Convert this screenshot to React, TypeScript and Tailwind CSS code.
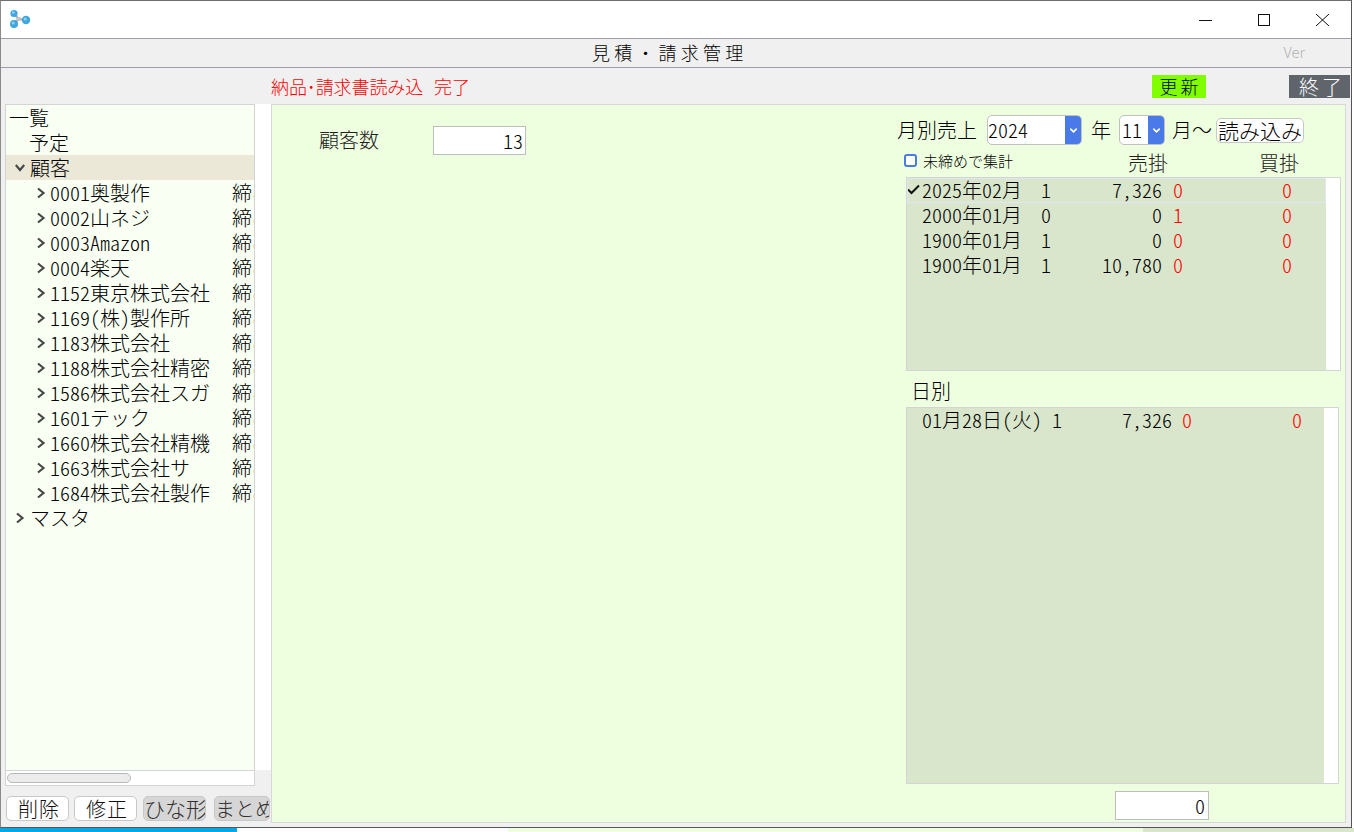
import { ChevronDown } from 'lucide-react';

const customers = [
  '0001奥製作',
  '0002山ネジ',
  '0003Amazon',
  '0004楽天',
  '1152東京株式会社',
  '1169(株)製作所',
  '1183株式会社',
  '1188株式会社精密',
  '1586株式会社スガ',
  '1601テック',
  '1660株式会社精機',
  '1663株式会社サ',
  '1684株式会社製作',
];

const months = [
  { date: '2025年02月', count: '1', amount: '7,326', a: '0', b: '0', on: true },
  { date: '2000年01月', count: '0', amount: '0', a: '1', b: '0', on: false },
  { date: '1900年01月', count: '1', amount: '0', a: '0', b: '0', on: false },
  { date: '1900年01月', count: '1', amount: '10,780', a: '0', b: '0', on: false },
];

function AppIcon() {
  return (
    <svg width="24" height="24" viewBox="0 0 24 24" className="ml-[8px]">
      <path d="M5 5.5 L9.5 11 L17 12 M9.5 11 L5 16" stroke="#a8a8a8" strokeWidth="2" fill="none" />
      <rect x="7.5" y="9" width="4" height="4" fill="#c4c4c4" />
      <circle cx="5" cy="5.5" r="3.6" fill="#3fa6de" />
      <circle cx="4.3" cy="4.6" r="1.4" fill="#8fd2f2" />
      <circle cx="17" cy="12" r="4.2" fill="#3fa6de" />
      <circle cx="16.2" cy="11" r="1.6" fill="#8fd2f2" />
      <circle cx="5" cy="16" r="4" fill="#3fa6de" />
      <circle cx="4.2" cy="15" r="1.5" fill="#8fd2f2" />
    </svg>
  );
}

function ChevronClosed() {
  return (
    <svg width="10" height="12" viewBox="0 0 10 12" className="shrink-0">
      <path d="M2 1.5 L7.5 6 L2 10.5" stroke="#484848" strokeWidth="2.2" fill="none" />
    </svg>
  );
}

function ChevronOpen() {
  return (
    <svg width="10" height="10" viewBox="0 0 10 10" className="shrink-0">
      <path d="M0.8 2 L5 7 L9.2 2" stroke="#484848" strokeWidth="2.2" fill="none" />
    </svg>
  );
}

function SelectBox({ value, box }: { value: string; box: string }) {
  return (
    <div className={`${box} h-[30px] flex bg-white border border-[#c0c0c0] rounded-[5px] overflow-hidden leading-[28px]`}>
      <span className="flex-1">{value}</span>
      <span className="w-[16px] bg-[#4a7ae8] flex items-center justify-center">
        <ChevronDown size={11} strokeWidth={3.5} className="text-white" />
      </span>
    </div>
  );
}

export default function App() {
  return (
    <div className="w-[1354px] h-[832px] overflow-hidden bg-white text-black text-[20px] font-light [font-family:'Noto_Sans_CJK_JP',sans-serif] [font-feature-settings:'hwid']">
      <div className="w-[1352px] h-[828px] flex flex-col bg-[#f0f0f0] border border-t-[#6e6e6e] border-l-[#8a8a8a] border-r-[#555] border-b-[#555]">
        {/* title bar */}
        <div className="h-[37px] shrink-0 bg-white flex items-center">
          <AppIcon />
          <div className="ml-auto flex items-center">
            <svg width="58" height="16" viewBox="0 0 58 16">
              <path d="M22 8.5 H35" stroke="#111" strokeWidth="1" />
            </svg>
            <svg width="58" height="16" viewBox="0 0 58 16">
              <rect x="23.5" y="2.5" width="11" height="11" stroke="#111" strokeWidth="1" fill="none" />
            </svg>
            <svg width="58" height="16" viewBox="0 0 58 16">
              <path d="M23 2 L36 14 M36 2 L23 14" stroke="#111" strokeWidth="1" fill="none" />
            </svg>
          </div>
        </div>

        {/* header */}
        <div className="h-[30px] shrink-0 flex items-center border-y border-[#a09ab0] pl-[591px] pr-[46px] pb-[3px] text-[18px] tracking-[4.2px] leading-none">
          <span>見積・請求管理</span>
          <span className="ml-auto text-[15px] tracking-normal text-[#b0b0b0] [font-feature-settings:normal]">Ver</span>
        </div>

        {/* status row */}
        <div className="h-[36px] shrink-0 flex items-center pl-[270px] pr-[1px] text-[18px]">
          <span className="text-[#ff0000] leading-none tracking-[-0.1px]">納品･請求書読み込</span>
          <span className="ml-[11px] text-[#ff0000] leading-none">完了</span>
          <span className="ml-auto w-[54px] h-[23px] bg-[#80ff00] text-center leading-[23px] pl-[3px] tracking-[3px]">更新</span>
          <span className="ml-[83px] w-[61px] h-[23px] bg-[#5f656b] text-white text-center leading-[23px] text-[20px] pl-[5px] tracking-[3px]">終了</span>
        </div>

        {/* main */}
        <div className="flex-1 min-h-0 flex pr-[5px] pb-[4px]">
          {/* left column */}
          <div className="w-[270px] shrink-0 pl-[4px] flex flex-col">
            <div className="h-[682px] shrink-0 flex flex-col">
              <div className="flex-1 min-h-0 flex">
                <div className="w-[250px] bg-[#f9fff2] border-l border-t border-r border-[#d4d4d4] overflow-hidden">
                  <div className="h-[25px] leading-[25px] pl-[3px]">一覧</div>
                  <div className="h-[25px] leading-[25px] pl-[23px]">予定</div>
                  <div className="h-[25px] leading-[25px] pl-[9px] bg-[#ebe8d8] flex items-center gap-[5px]">
                    <ChevronOpen />
                    <span>顧客</span>
                  </div>
                  {customers.map((c) => (
                    <div key={c} className="h-[25px] leading-[25px] pl-[30px] flex items-center">
                      <ChevronClosed />
                      <span className="w-[182px] ml-[4px] shrink-0 whitespace-nowrap">{c}</span>
                      <span className="shrink-0 whitespace-nowrap">締め</span>
                    </div>
                  ))}
                  <div className="h-[25px] leading-[25px] pl-[9px] flex items-center gap-[5px]">
                    <ChevronClosed />
                    <span>マスタ</span>
                  </div>
                </div>
                <div className="w-[16px] bg-white" />
              </div>
              <div className="w-[250px] h-[16px] shrink-0 bg-white border border-[#d4d4d4] flex items-center pl-[1px]">
                <div className="w-[124px] h-[10px] bg-[#ececec] border border-[#b8b8b8] rounded-full" />
              </div>
            </div>
            <div className="mt-[10px] flex text-[#101010]">
              <button className="ml-[1px] w-[63px] h-[25px] bg-white border border-[#c8c8c8] rounded-[5px] leading-none pl-[3px] tracking-[1px]">削除</button>
              <button className="ml-[5px] w-[63px] h-[25px] bg-white border border-[#c8c8c8] rounded-[5px] leading-none pl-[3px] tracking-[1px]">修正</button>
              <button className="ml-[6px] w-[63px] h-[25px] bg-[#d6d6d6] border border-[#c8c8c8] rounded-[5px] text-[21px] leading-none whitespace-nowrap overflow-hidden text-[#303030]">ひな形</button>
              <button className="ml-[8px] w-[56px] h-[25px] bg-[#d6d6d6] border border-[#c8c8c8] rounded-[5px] text-[20px] leading-none whitespace-nowrap overflow-hidden text-[#303030]">まとめ</button>
            </div>
          </div>

          {/* right panel */}
          <div className="flex-1 min-w-0 flex bg-[#eeffe0] border border-[#d8d8d8]">
            <div className="flex-1 min-w-0 pl-[47px] pt-[20px]">
              <div className="flex items-center">
                <span className="w-[114px] text-[#202020]">顧客数</span>
                <div className="w-[93px] h-[29px] bg-white border border-[#bdbdbd] text-right pr-[2px] leading-[27px]">13</div>
              </div>
            </div>

            <div className="w-[448px] shrink-0 flex flex-col pt-[10px]">
              <div className="flex items-center h-[30px]">
                <span className="w-[90px]">月別売上</span>
                <SelectBox value="2024" box="w-[95px]" />
                <span className="ml-[9px] w-[28px]">年</span>
                <SelectBox value="11" box="w-[46px] pl-[2px]" />
                <span className="ml-[7px] w-[44px] whitespace-nowrap [font-feature-settings:normal]">月〜</span>
                <button className="w-[88px] h-[25px] bg-white border border-[#c8c8c8] rounded-[5px] text-[21px] leading-none whitespace-nowrap overflow-hidden">読み込み</button>
              </div>

              <div className="h-[32px] flex items-center">
                <span className="ml-[7px] mb-[2px] w-[13px] h-[13px] bg-white border-2 border-[#4a7ae8] rounded-[3px]" />
                <span className="ml-[6px] mb-[2px] w-[205px] text-[15px] leading-none">未締めで集計</span>
                <span className="mt-[4px] w-[131px] text-[#202020]">売掛</span>
                <span className="mt-[4px] text-[#202020]">買掛</span>
              </div>

              <div className="ml-[9px] mr-[4px] h-[194px] shrink-0 flex border border-[#d4d4d4] bg-white">
                <div className="w-[419px] bg-[#d9e6cb]">
                  {months.map((m, i) => (
                    <div
                      key={i}
                      className={`h-[25px] grid grid-cols-[15px_108px_32px_100px_100px_30px] leading-[23px] ${m.on ? 'outline outline-1 -outline-offset-1 outline-[#e0e6f4]' : ''}`}
                    >
                      <span className="flex items-center justify-center pb-[2px] pr-[2px]">
                        {m.on && (
                          <svg width="13" height="11" viewBox="0 0 13 11">
                            <path d="M1 5.5 L4.5 9 L12 1.5" stroke="#111" strokeWidth="2" fill="none" />
                          </svg>
                        )}
                      </span>
                      <span className="whitespace-nowrap">{m.date}</span>
                      <span className="text-center">{m.count}</span>
                      <span className="text-right">{m.amount}</span>
                      <span className="pl-[11px] text-[#ff0000]">{m.a}</span>
                      <span className="text-right text-[#ff0000]">{m.b}</span>
                    </div>
                  ))}
                </div>
              </div>

              <div className="ml-[14px] h-[36px] leading-[40px]">日別</div>

              <div className="ml-[9px] mr-[6px] h-[377px] shrink-0 flex border border-[#d4d4d4] bg-white">
                <div className="w-[417px] bg-[#d9e6cb]">
                  <div className="h-[25px] grid grid-cols-[15px_125px_20px_105px_100px_30px] leading-[23px]">
                    <span />
                    <span className="whitespace-nowrap">01月28日(火)</span>
                    <span className="text-center">1</span>
                    <span className="text-right">7,326</span>
                    <span className="pl-[10px] text-[#ff0000]">0</span>
                    <span className="text-right text-[#ff0000]">0</span>
                  </div>
                </div>
              </div>

              <div className="mt-[7px] ml-[218px] w-[94px] h-[29px] bg-white border border-[#bdbdbd] text-right pr-[3px] leading-[27px]">0</div>
            </div>
          </div>
        </div>
      </div>

      {/* what shows below the window */}
      <div className="h-[4px] flex">
        <div className="w-[237px] bg-[#00a8e8]" />
        <div className="w-[271px] bg-white" />
        <div className="w-[635px] bg-[#eeffe0]" />
        <div className="flex-1 bg-[#d9e6cb]" />
      </div>
    </div>
  );
}
